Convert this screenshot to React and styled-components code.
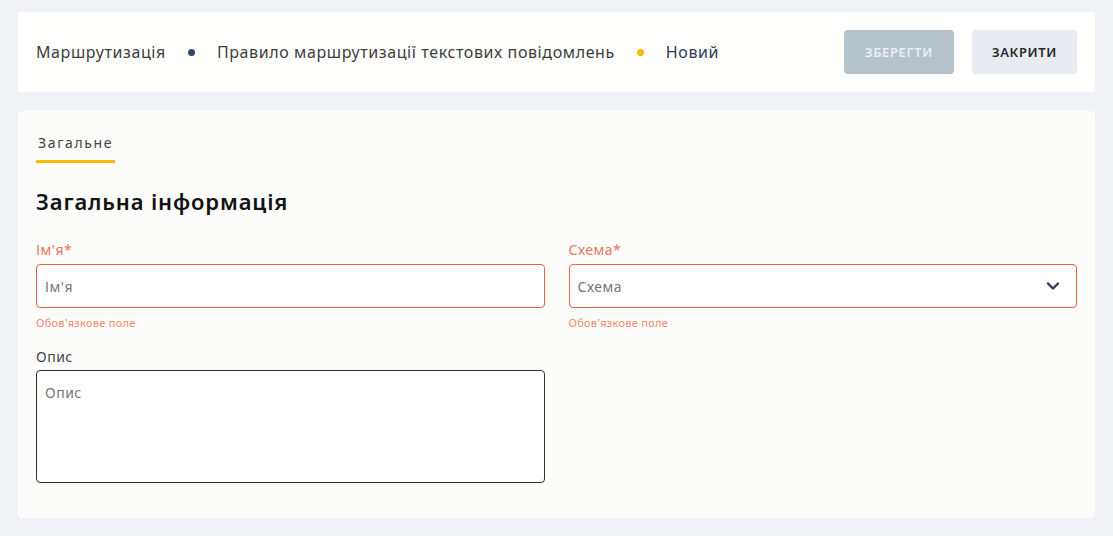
import React from "react";
import styled, { createGlobalStyle } from "styled-components";

const Global = createGlobalStyle`
  html, body { margin: 0; padding: 0; background: #f0f2f5; }
  body { font-family: "Noto Sans", "Open Sans", sans-serif; }
  * { box-sizing: border-box; }
`;

const Page = styled.div`
  padding: 12px 18px 18px;
  display: flex;
  flex-direction: column;
  gap: 19px;
  min-height: 536px;
`;

const HeaderCard = styled.div`
  background: #fffffe;
  border-radius: 4px;
  height: 80px;
  display: flex;
  align-items: center;
  padding: 0 18px;
`;

const Crumbs = styled.div`
  display: flex;
  align-items: center;
  flex: 1;
  font-size: 16px;
  gap: 20px;
`;

const Crumb = styled.span`
  color: ${(p) => (p.$current ? "#2f3a52" : "#3d3d3d")};
  letter-spacing: 0.6px;
`;

const Dot = styled.span`
  width: 7px;
  height: 7px;
  border-radius: 50%;
  background: ${(p) => p.$color};
  margin: 0 2px;
`;

const Actions = styled.div`
  display: flex;
  gap: 18px;
`;

const Button = styled.button`
  height: 44px;
  width: ${(p) => p.$w}px;
  padding: 0;
  border: none;
  border-radius: 4px;
  font-family: inherit;
  font-weight: 600;
  font-size: 13px;
  letter-spacing: 0.6px;
  background: ${(p) => (p.$disabled ? "#b6c2ca" : "#e8ecf0")};
  color: ${(p) => (p.$disabled ? "#e9eef2" : "#2a2a2a")};
`;

const MainCard = styled.div`
  background: #fcfcfa;
  border-radius: 4px;
  padding: 22px 18px 35px;
`;

const Tabs = styled.div`
  display: flex;
`;

const Tab = styled.div`
  font-size: 14px;
  letter-spacing: 1.65px;
  color: #444;
  padding: 0 2px 8px;
  border-bottom: 3px solid #fbb800;
`;

const Heading = styled.h2`
  margin: 23px 0 25px;
  font-size: 22px;
  font-weight: 600;
  color: #121212;
  letter-spacing: 0.85px;
`;

const Grid = styled.div`
  display: grid;
  grid-template-columns: 1fr 1fr;
  column-gap: 24px;
  row-gap: 18px;
  align-items: start;
`;

const Field = styled.div`
  display: flex;
  flex-direction: column;
`;

const Label = styled.label`
  font-size: 14px;
  line-height: 18px;
  letter-spacing: 0.5px;
  color: ${(p) => (p.$error ? "#ea7759" : "#444")};
  margin-bottom: ${(p) => (p.$error ? 5 : 4)}px;
`;

const Box = styled.div`
  position: relative;
  height: ${(p) => p.$h}px;
  border: 1px solid ${(p) => (p.$error ? "#e8603f" : "#333")};
  border-radius: 4px;
  background: #fff;
  display: flex;
  align-items: ${(p) => (p.$multi ? "flex-start" : "center")};
  padding: ${(p) => (p.$multi ? "12px 8px" : "0 8px")};
`;

const Placeholder = styled.span`
  font-size: 14px;
  letter-spacing: 0.5px;
  color: #767676;
  flex: 1;
`;

const ErrorText = styled.span`
  font-size: 11px;
  letter-spacing: 0.3px;
  color: #f08a70;
  margin-top: 7px;
`;

const Chevron = () => (
  <svg width="14" height="10" viewBox="0 0 14 10" style={{ marginRight: 8 }}>
    <path d="M2 2.5 L7 7.5 L12 2.5" fill="none" stroke="#2f3a52" strokeWidth="2.4" strokeLinecap="round" strokeLinejoin="round" />
  </svg>
);

export default function App() {
  return (
    <>
      <Global />
      <Page>
        <HeaderCard>
          <Crumbs>
            <Crumb>Маршрутизація</Crumb>
            <Dot $color="#34466b" />
            <Crumb>Правило маршрутизації текстових повідомлень</Crumb>
            <Dot $color="#fbb800" />
            <Crumb $current>Новий</Crumb>
          </Crumbs>
          <Actions>
            <Button $disabled $w={110}>ЗБЕРЕГТИ</Button>
            <Button $w={105}>ЗАКРИТИ</Button>
          </Actions>
        </HeaderCard>
        <MainCard>
          <Tabs>
            <Tab>Загальне</Tab>
          </Tabs>
          <Heading>Загальна інформація</Heading>
          <Grid>
            <Field>
              <Label $error>Ім'я*</Label>
              <Box $h={44} $error>
                <Placeholder>Ім'я</Placeholder>
              </Box>
              <ErrorText>Обов'язкове поле</ErrorText>
            </Field>
            <Field>
              <Label $error>Схема*</Label>
              <Box $h={44} $error>
                <Placeholder>Схема</Placeholder>
                <Chevron />
              </Box>
              <ErrorText>Обов'язкове поле</ErrorText>
            </Field>
            <Field>
              <Label>Опис</Label>
              <Box $h={113} $multi>
                <Placeholder>Опис</Placeholder>
              </Box>
            </Field>
          </Grid>
        </MainCard>
      </Page>
    </>
  );
}
